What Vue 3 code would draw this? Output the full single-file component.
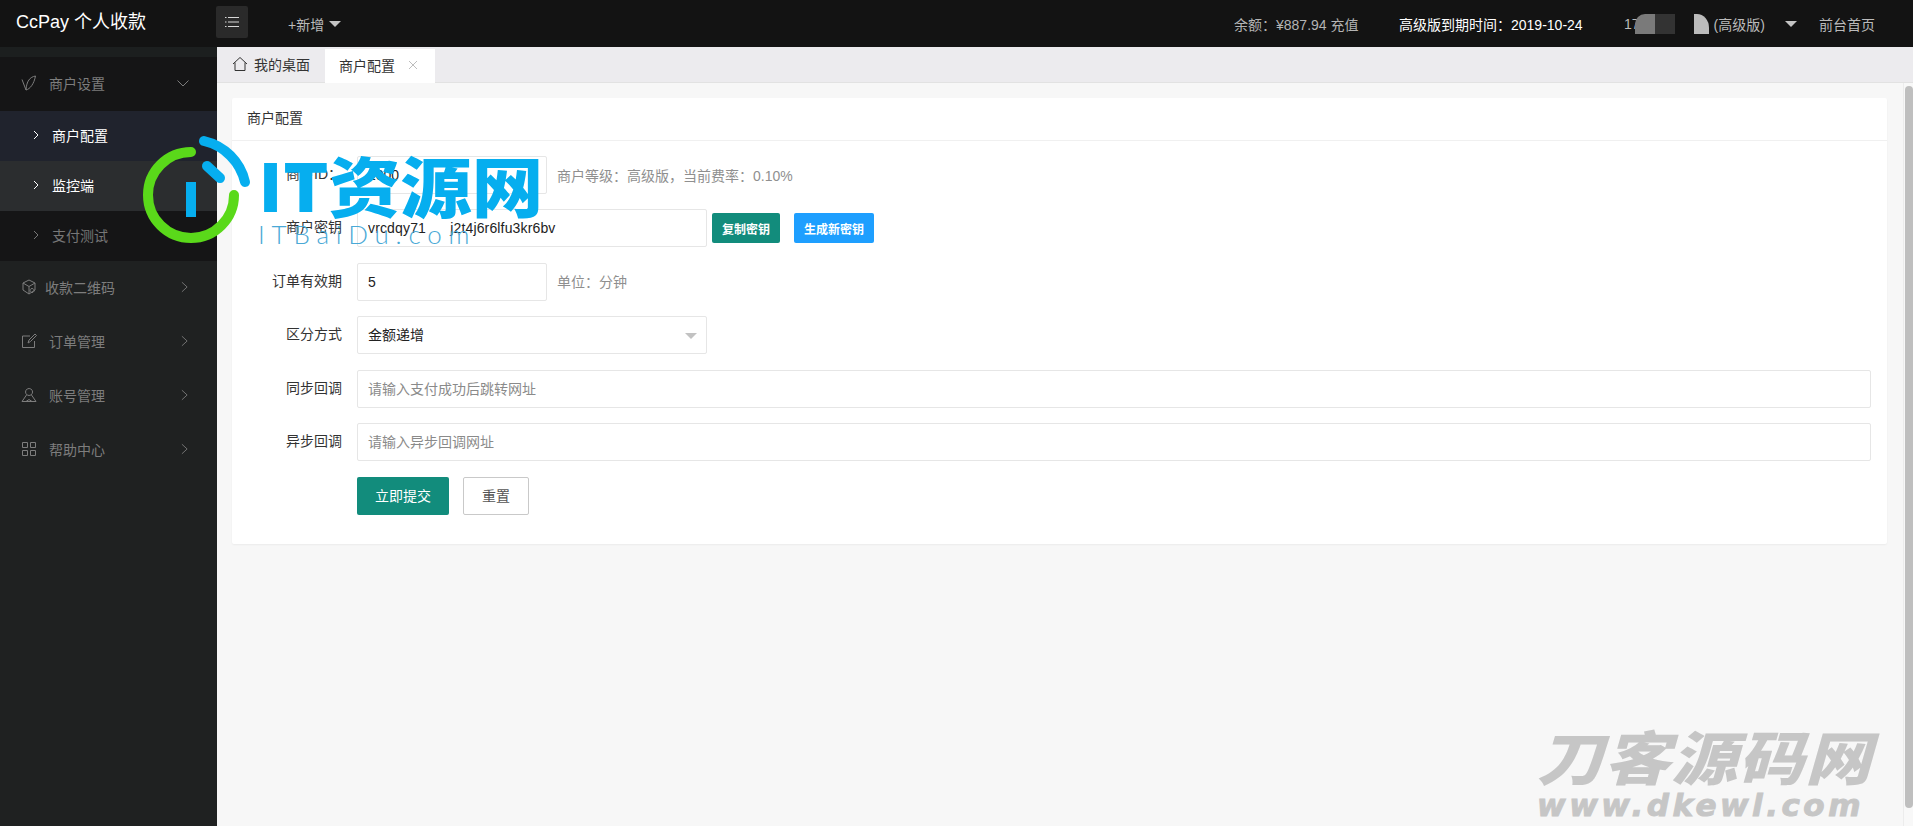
<template>
  <div class="page">
    <header class="topbar">
      <div class="brand">CcPay 个人收款</div>
      <button class="toggle" type="button">
        <svg width="16" height="12" viewBox="0 0 16 12" fill="none" stroke="#d8d8d8" stroke-width="1">
          <path d="M4 1.500h11M4 6h11M4 10.500h11M1 1.500h1.500M1 6h1.500M1 10.500h1.500" />
        </svg>
      </button>
      <div class="add">+新增<i class="caret"></i></div>
      <div class="top-right">
        <span class="balance">余额：¥887.94 充值</span>
        <span class="expire">高级版到期时间：2019-10-24</span>
        <span class="account">
          <span class="acc-num">17</span>
          <span class="mosaic"><b></b><b></b></span>
          <span class="acc-blob"></span>
          <span class="acc-level">(高级版)</span>
          <i class="caret"></i>
        </span>
        <span class="home">前台首页</span>
      </div>
    </header>

    <div class="body">
      <aside class="sidebar">
        <div class="side-strip"></div>
        <div class="open-group">
          <div class="menu-item head">
            <svg class="menu-icon" viewBox="0 0 16 16" fill="none" stroke="#7d7d7d" stroke-width="1">
              <path d="M1 4.500l4 10.500c4-1 8-6 9.500-14C9 2 5.500 6 5 15" />
            </svg>
            <span>商户设置</span>
            <svg class="chevron down" viewBox="0 0 12 8" fill="none" stroke="#7d7d7d" stroke-width="1">
              <path d="M.5 1.500l5.500 5.500 5.500-5.500" />
            </svg>
          </div>
          <div
            v-for="sub in subMenu"
            :key="sub.name"
            class="sub-item"
            :class="sub.cls"
          >
            <svg class="sub-arrow" viewBox="0 0 6 10" fill="none" stroke="currentColor" stroke-width="1">
              <path d="M1 1l4 4-4 4" />
            </svg>
            <span>{{ sub.name }}</span>
          </div>
        </div>
        <div v-for="item in menu" :key="item.name" class="menu-item">
          <svg class="menu-icon" viewBox="0 0 16 16" fill="none" stroke="#7d7d7d" stroke-width="1">
            <path :d="item.icon" />
          </svg>
          <span :class="{ tight: item.name.length > 4 }">{{ item.name }}</span>
          <svg class="chevron" viewBox="0 0 8 12" fill="none" stroke="#7d7d7d" stroke-width="1">
            <path d="M1 .5l6 5.500-6 5.500" />
          </svg>
        </div>
      </aside>

      <div class="right">
        <div class="tabs">
          <div class="tab">
            <svg width="16" height="16" viewBox="0 0 16 16" fill="none" stroke="#333" stroke-width="1">
              <path d="M1 8l7-6.500L15 8M3 6.500V14.500h10V6.500" />
            </svg>
            <span>我的桌面</span>
          </div>
          <div class="tab active">
            <span>商户配置</span>
            <svg width="10" height="10" viewBox="0 0 10 10" fill="none" stroke="#bdbdbd" stroke-width="1">
              <path d="M1 1l8 8M9 1l-8 8" />
            </svg>
          </div>
        </div>

        <div class="content">
          <main class="main">
            <section class="card">
              <div class="card-title">商户配置</div>
              <form class="form" @submit.prevent>
                <label class="form-label">商户ID：</label>
                <div class="form-field">
                  <input class="input short" value="1000" />
                  <span class="hint">商户等级：高级版，当前费率：0.10%</span>
                </div>

                <label class="form-label">商户密钥</label>
                <div class="form-field">
                  <input class="input mid key" value="vrcdqy71      j2t4j6r6lfu3kr6bv" />
                  <button class="btn-sm teal" type="button">复制密钥</button>
                  <button class="btn-sm blue" type="button">生成新密钥</button>
                </div>

                <label class="form-label">订单有效期</label>
                <div class="form-field">
                  <input class="input short" value="5" />
                  <span class="hint">单位：分钟</span>
                </div>

                <label class="form-label">区分方式</label>
                <div class="form-field">
                  <div class="select-wrap">
                    <select class="input mid">
                      <option>金额递增</option>
                    </select>
                    <i class="select-caret"></i>
                  </div>
                </div>

                <label class="form-label">同步回调</label>
                <div class="form-field">
                  <input class="input" placeholder="请输入支付成功后跳转网址" />
                </div>

                <label class="form-label">异步回调</label>
                <div class="form-field">
                  <input class="input" placeholder="请输入异步回调网址" />
                </div>

                <span></span>
                <div class="form-field actions">
                  <button class="btn primary" type="submit">立即提交</button>
                  <button class="btn plain" type="reset">重置</button>
                </div>
              </form>
            </section>
          </main>
          <div class="scroll-track"><div class="scroll-thumb"></div></div>
        </div>
      </div>
    </div>

    <!-- watermarks sit over the page -->
    <div class="wm-logo">
      <svg width="130" height="120" viewBox="0 0 130 120" fill="none" stroke-linecap="round">
        <path d="M56 18A43 43 0 1 0 99 61" stroke="#5ad91a" stroke-width="10" />
        <path d="M69 7A54.600 54.600 0 0 1 110 48" stroke="#06aeef" stroke-width="10" />
        <path d="M72 32L85 44" stroke="#06aeef" stroke-width="10" />
        <path d="M56 48V83" stroke="#06aeef" stroke-width="10" stroke-linecap="butt" />
      </svg>
      <div class="wm-text">
        <div class="wm-title">IT资源网</div>
        <div class="wm-sub">ITBaiDu.com</div>
      </div>
    </div>
    <div class="wm-corner">
      <div class="wm-corner-title">刀客源码网</div>
      <div class="wm-corner-sub">www.dkewl.com</div>
    </div>
  </div>
</template>

<script setup>
const subMenu = [
  { name: "商户配置", cls: "active" },
  { name: "监控端", cls: "hover" },
  { name: "支付测试", cls: "" },
];

const menu = [
  {
    name: "收款二维码",
    icon: "M8 1l6 3v7l-6 4-6-4V4zM2 4l6 3.500L14 4M8 7.500V15M11 9.500a2 2 0 1 0 .1 0",
  },
  {
    name: "订单管理",
    icon: "M9 3H1.500v11.500h12V8M7 10l1-3 6-6 1.500 1.500-6 6z",
  },
  {
    name: "账号管理",
    icon: "M8 1.500a3.500 3.500 0 1 0 .1 0M5.500 8L1 14.500h14L10.500 8M5 14.500l3-2 3 2",
  },
  {
    name: "帮助中心",
    icon: "M1.500 1.500h5v5h-5zM9.500 1.500h5v5h-5zM1.500 9.500h5v5h-5zM9.500 9.500h5v5h-5z",
  },
];
</script>

<style>
html,
body {
  margin: 0;
  height: 100%;
  overflow: hidden;
}
</style>

<style scoped>
.page {
  position: relative;
  width: 1913px;
  height: 826px;
  overflow: hidden;
  font-family: "Liberation Sans", "Noto Sans CJK SC", sans-serif;
  font-size: 14px;
  color: #333;
}

.topbar {
  height: 47px;
  background: #131313;
  display: flex;
  align-items: center;
  color: #bbb;
}

.brand {
  width: 216px;
  padding-left: 16px;
  box-sizing: border-box;
  font-size: 18px;
  color: #fff;
  margin-bottom: 8px;
}

.toggle {
  width: 32px;
  height: 32px;
  margin-bottom: 3px;
  padding: 0;
  border: none;
  border-radius: 2px;
  background: #2a2a2a;
  display: flex;
  align-items: center;
  justify-content: center;
}

.add {
  margin-left: 40px;
  display: flex;
  align-items: center;
  gap: 5px;
}

.caret {
  width: 0;
  height: 0;
  border-left: 6px solid transparent;
  border-right: 6px solid transparent;
  border-top: 6px solid #c4c4c4;
}

.top-right {
  margin-left: auto;
  padding: 1px 38px 0 0;
  display: flex;
  align-items: center;
}

.balance {
  width: 165px;
  color: #b4b4b4;
}

.expire {
  width: 225px;
  color: #fff;
}

.account {
  width: 195px;
  display: flex;
  align-items: center;
}

.mosaic {
  display: flex;
  height: 20px;
  margin-left: -5px;
}

.mosaic b {
  width: 20px;
  background: #7a7a7a;
}

.mosaic b:first-child {
  border-top-left-radius: 10px;
}

.mosaic b:last-child {
  background: #333;
}

.acc-blob {
  width: 15px;
  height: 20px;
  margin-left: 19px;
  background: #bbb;
  border-top-right-radius: 12px 14px;
}

.acc-level {
  margin-left: 5px;
  width: 71px;
}

.home {
  color: #bbb;
}

.body {
  display: flex;
  height: 779px;
}

.sidebar {
  width: 217px;
  flex: none;
  background: #1f2121;
  color: #7d7d7d;
}

.side-strip {
  height: 10px;
  background: #1c1f1f;
}

.open-group {
  background: #151516;
}

.menu-item {
  height: 54px;
  box-sizing: border-box;
  display: flex;
  align-items: center;
  padding: 0 29px 2px 21px;
}

.menu-icon {
  width: 16px;
  height: 16px;
  margin-right: 12px;
  flex: none;
}

.tight {
  margin-left: -4px;
}

.chevron {
  width: 7px;
  height: 12px;
  margin-left: auto;
}

.chevron.down {
  width: 12px;
  height: 8px;
  margin-right: -1px;
}

.sub-item {
  height: 50px;
  box-sizing: border-box;
  display: flex;
  align-items: center;
  padding: 0 0 2px 33px;
  color: #777;
}

.sub-arrow {
  width: 6px;
  height: 10px;
  margin-right: 13px;
}

.sub-item.active {
  background: #20232d;
  color: #fff;
}

.sub-item.hover {
  background: #2b2d2f;
  color: #fff;
}

.right {
  flex: 1;
  min-width: 0;
  display: flex;
  flex-direction: column;
}

.tabs {
  height: 35px;
  background: #ecebee;
  border-bottom: 1px solid #e2e2e2;
  display: flex;
  flex: none;
}

.tab {
  width: 108px;
  height: 35px;
  box-sizing: border-box;
  padding: 0 0 2px 15px;
  display: flex;
  align-items: center;
  gap: 6px;
}

.tab.active {
  width: 110px;
  margin-top: 2px;
  height: 34px;
  padding-left: 14px;
  background: #fff;
  gap: 13px;
}

.content {
  flex: 1;
  display: flex;
  background: #f7f7f7;
  min-height: 0;
}

.main {
  flex: 1;
  padding: 15px 16px 0 15px;
}

.card {
  background: #fff;
  height: 446px;
  box-sizing: border-box;
  border-radius: 2px;
  box-shadow: 0 1px 2px rgba(0, 0, 0, 0.05);
}

.card-title {
  height: 43px;
  line-height: 41px;
  padding-left: 15px;
  box-sizing: border-box;
  border-bottom: 1px solid #f0f0f0;
}

.form {
  display: grid;
  grid-template-columns: 110px 1fr;
  column-gap: 15px;
  row-gap: 15.450px;
  padding: 15px 16px 0 0;
}

.form-label {
  text-align: right;
  line-height: 37px;
  color: #333;
}

.form-field {
  display: flex;
  align-items: center;
  height: 38px;
}

.input {
  width: 100%;
  height: 38px;
  box-sizing: border-box;
  padding: 0 10px;
  border: 1px solid #e6e6e6;
  border-radius: 2px;
  background: #fff;
  font: inherit;
  color: #222;
  outline: none;
  appearance: none;
}

.input::placeholder {
  color: #8a8a8a;
}

.input.short {
  width: 190px;
  flex: none;
}

.input.mid {
  width: 350px;
  flex: none;
}

.input.key {
  letter-spacing: 0.15px;
}

.hint {
  margin-left: 10px;
  color: #8f8f8f;
  padding-bottom: 1px;
}

.select-wrap {
  position: relative;
}

.select-caret {
  position: absolute;
  right: 10px;
  top: 17px;
  width: 0;
  height: 0;
  border-left: 6px solid transparent;
  border-right: 6px solid transparent;
  border-top: 6px solid #c2c2c2;
}

.btn-sm {
  height: 30px;
  padding: 0;
  border: none;
  border-radius: 2px;
  color: #fff;
  font: inherit;
  font-size: 12px;
  font-weight: bold;
}

.btn-sm.teal {
  width: 68px;
  margin-left: 5px;
  background: #128c7c;
}

.btn-sm.blue {
  width: 80px;
  margin-left: 14px;
  background: #1e9fff;
}

.actions {
  gap: 14px;
}

.btn {
  height: 38px;
  padding: 0 0 2px;
  border-radius: 2px;
  font: inherit;
}

.btn.primary {
  width: 92px;
  border: none;
  background: #128c7c;
  color: #fff;
}

.btn.plain {
  width: 66px;
  border: 1px solid #c9c9c9;
  background: #fff;
  color: #555;
}

.scroll-track {
  width: 10px;
  flex: none;
  box-sizing: border-box;
  padding: 3px 0 18px 1px;
  background: #f8f8f8;
  border-left: 1px solid #ececec;
}

.scroll-thumb {
  height: 100%;
  background: #bfbfbf;
  border-radius: 4px;
}

.wm-logo {
  position: absolute;
  left: 135px;
  top: 134px;
  pointer-events: none;
}

.wm-text {
  position: absolute;
  left: 123px;
  top: 10px;
  white-space: nowrap;
}

.wm-title {
  font-family: "Noto Sans CJK SC", sans-serif;
  font-weight: 900;
  font-size: 71.500px;
  line-height: 78px;
  color: #06aeef;
  transform: scaleY(0.92);
}

.wm-sub {
  margin-top: -3px;
  font-family: "Lato", sans-serif;
  font-weight: 300;
  font-size: 26px;
  line-height: 30px;
  letter-spacing: 6.800px;
  color: #4aa9d6;
}

.wm-corner {
  position: absolute;
  left: 1537px;
  top: 720px;
  color: #c6c6c6;
  white-space: nowrap;
  pointer-events: none;
}

.wm-corner-title {
  font-family: "Noto Sans CJK SC", sans-serif;
  font-weight: 900;
  font-style: italic;
  font-size: 66px;
  line-height: 68px;
  letter-spacing: 1px;
  transform: scaleY(0.88);
}

.wm-corner-sub {
  margin-top: 2px;
  font-family: "DejaVu Sans", sans-serif;
  font-weight: bold;
  font-style: italic;
  font-size: 31px;
  line-height: 30px;
  letter-spacing: 3.500px;
  -webkit-text-stroke: 1px #c6c6c6;
}
</style>
